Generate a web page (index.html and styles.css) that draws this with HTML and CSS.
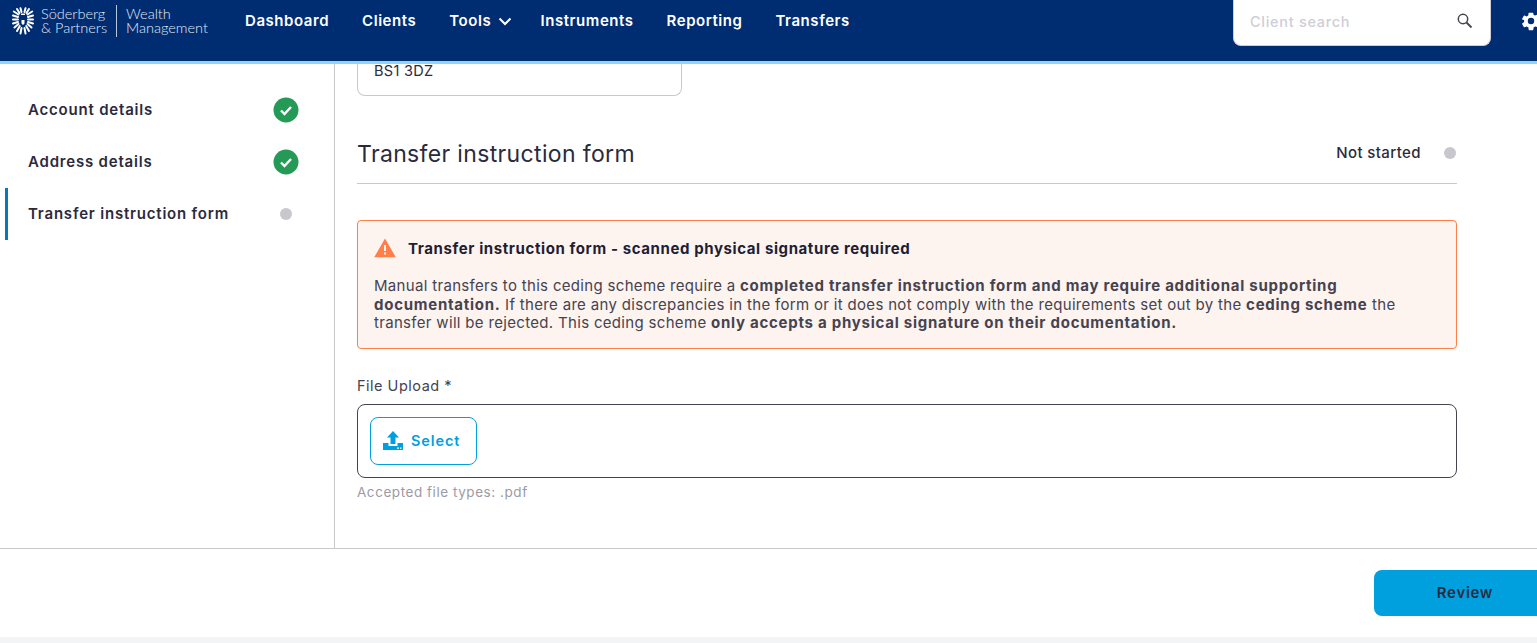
FILE: index.html
```html
<!DOCTYPE html>
<html lang="en">
<head>
<meta charset="utf-8">
<title>Transfer instruction form</title>
<link rel="stylesheet" href="styles.css">
</head>
<body>
<header class="topbar">
  <div class="brand">
    <svg class="brand-mark" width="22" height="28" viewBox="0 0 22 28">
      <g stroke="#fff" stroke-width="2" fill="none" stroke-linecap="round">
        <path d="M9.500 5 L8.500 1.200"/><path d="M12.500 5 L13.500 1.200"/>
        <path d="M7.500 6 L5 2"/><path d="M14.500 6 L17 2"/>
        <path d="M6.500 7.500 L1.800 4.500"/><path d="M15.500 7.500 L20.200 4.500"/>
        <path d="M6 10 L1 8.500"/><path d="M16 10 L21 8.500"/>
        <path d="M6 12.500 L1 12.500"/><path d="M16 12.500 L21 12.500"/>
        <path d="M6 15 L1 16.500"/><path d="M16 15 L21 16.500"/>
        <path d="M6.500 17 L2.500 20.500"/><path d="M15.500 17 L19.500 20.500"/>
        <path d="M7.800 19 L5 24"/><path d="M14.200 19 L17 24"/>
        <path d="M9.500 21 L8.500 26.500"/><path d="M12.500 21 L13.500 26.500"/>
      </g>
      <path fill="#fff" d="M9 6.500 H13 V8 H9 Z M9.500 13 H12.500 V16.500 L11 18 L9.500 16.500 Z"/>
    </svg>
    <div class="brand-name"><span>Söderberg</span><span>&amp; Partners</span></div>
    <div class="brand-sub"><span>Wealth</span><span>Management</span></div>
  </div>
  <nav class="nav">
    <a>Dashboard</a>
    <a>Clients</a>
    <a class="nav-tools">Tools
      <svg width="14" height="9" viewBox="0 0 14 9"><path d="M1.500 1.500 L7 7 L12.500 1.500" fill="none" stroke="#fff" stroke-width="2"/></svg>
    </a>
    <a>Instruments</a>
    <a>Reporting</a>
    <a>Transfers</a>
  </nav>
  <div class="search">
    <span class="search-ph">Client search</span>
    <svg width="18" height="18" viewBox="0 0 18 18"><circle cx="7" cy="7" r="4.700" fill="none" stroke="#45434f" stroke-width="1.500"/><path d="M10.500 10.500 L15.500 15.500" stroke="#45434f" stroke-width="1.800"/></svg>
  </div>
  <svg class="gear" width="22" height="22" viewBox="0 0 24 24"><path fill="#fff" fill-rule="evenodd" d="M19.400 13a7.500 7.500 0 0 0 0-2l2.100-1.600a.5.5 0 0 0 .1-.6l-2-3.500a.5.5 0 0 0-.6-.2l-2.500 1a7.300 7.300 0 0 0-1.700-1L14.400 3.400a.5.5 0 0 0-.5-.4h-4a.5.5 0 0 0-.5.400L9 6.100a7.300 7.300 0 0 0-1.700 1l-2.500-1a.5.5 0 0 0-.6.200l-2 3.500a.5.5 0 0 0 .1.600L4.500 11a7.500 7.500 0 0 0 0 2l-2.100 1.600a.5.5 0 0 0-.1.600l2 3.500a.5.5 0 0 0 .6.200l2.500-1a7.300 7.300 0 0 0 1.700 1l.4 2.700a.5.500 0 0 0 .5.400h4a.5.5 0 0 0 .5-.4l.4-2.700a7.300 7.300 0 0 0 1.700-1l2.500 1a.5.5 0 0 0 .6-.2l2-3.500a.5.5 0 0 0-.1-.6ZM12 15.500a3.500 3.500 0 1 1 0-7 3.500 3.500 0 0 1 0 7Z"/></svg>
</header>

<div class="workspace">
  <aside class="sidebar">
    <div class="step">
      <span class="step-label">Account details</span>
      <svg class="step-icon" width="26" height="26" viewBox="0 0 26 26"><circle cx="13" cy="13" r="12.500" fill="#259a57"/><path d="M8 13.500 L11.500 17 L18 10" fill="none" stroke="#fff" stroke-width="2.400"/></svg>
    </div>
    <div class="step">
      <span class="step-label">Address details</span>
      <svg class="step-icon" width="26" height="26" viewBox="0 0 26 26"><circle cx="13" cy="13" r="12.500" fill="#259a57"/><path d="M8 13.500 L11.500 17 L18 10" fill="none" stroke="#fff" stroke-width="2.400"/></svg>
    </div>
    <div class="step step-active">
      <span class="step-label">Transfer instruction form</span>
      <span class="step-dot-wrap"><span class="dot"></span></span>
    </div>
  </aside>

  <main class="content">
    <div class="cut-field">BS1 3DZ</div>

    <div class="section-head">
      <h2>Transfer instruction form</h2>
      <div class="status">Not started <span class="dot"></span></div>
    </div>

    <section class="alert">
      <div class="alert-title">
        <svg width="22" height="20" viewBox="0 0 22 20"><path fill="#ff7f4a" fill-rule="evenodd" d="M11 0.500 L21.800 19.300 H0.200 Z M10 7 V13 H12 V7 Z M10 14.500 V16.500 H12 V14.500 Z"/></svg>
        <span>Transfer instruction form - scanned physical signature required</span>
      </div>
      <p>Manual transfers to this ceding scheme require a <b>completed transfer instruction form and may require additional supporting documentation.</b> If there are any discrepancies in the form or it does not comply with the requirements set out by the <b>ceding scheme</b> the transfer will be rejected. This ceding scheme <b>only accepts a physical signature on their documentation.</b></p>
    </section>

    <div class="upload-label">File Upload *</div>
    <div class="upload-box">
      <button class="select-btn">
        <svg width="22" height="22" viewBox="0 0 22 22"><path fill="#00a0df" d="M11 1 L17 7.500 H13.500 V14 H8.500 V7.500 H5 Z M1 13 H6.500 V16 H15.500 V13 H21 V20 H1 Z"/><path fill="#fff" d="M15 17.500 H17 V18.800 H15 Z M18 17.500 H19.500 V18.800 H18 Z"/></svg>
        <span class="btn-text">Select</span>
      </button>
    </div>
    <div class="upload-hint">Accepted file types: .pdf</div>
  </main>
</div>

<footer class="footer">
  <button class="review"><span class="btn-text">Review</span></button>
</footer>
<div class="page-end"></div>
</body>
</html>
```
FILE: styles.css
```css
* { box-sizing: border-box; }
html, body { margin: 0; height: 643px; overflow: hidden; }
body {
  width: 1537px;
  background: #fff;
  font-family: "Inter", "Liberation Sans", sans-serif;
  color: #2b2a3d;
  display: flex;
  flex-direction: column;
}

/* top bar */
.topbar {
  height: 64px;
  flex: none;
  background: #002d72;
  border-bottom: 3px solid #8fd6f4;
  display: flex;
  align-items: flex-start;
  color: #fff;
  overflow: hidden;
}
.brand { display: flex; align-items: center; width: 245px; padding: 5px 0 0 12px; flex: none; }
.brand-mark { flex: none; margin-right: 7px; }
.brand-name, .brand-sub {
  display: flex;
  flex-direction: column;
  font-family: "Lato", "Liberation Sans", sans-serif;
  font-size: 14.500px;
  line-height: 14px;
  font-weight: 300;
  color: #e3e9f2;
  white-space: nowrap;
}
.brand-name { padding-right: 9px; }
.brand-sub { border-left: 1px solid #b8c6dc; padding-left: 9px; height: 32px; justify-content: center; }
.nav { display: flex; gap: 33px; padding-top: 11px; width: 988px; flex: none; }
.nav a {
  font-size: 15px;
  line-height: 20px;
  font-weight: 600;
  letter-spacing: 0.550px;
  color: #fff;
  white-space: nowrap;
}
.nav-tools svg { margin: 0 -4px 0 2px; }
.search {
  width: 258px;
  height: 46px;
  flex: none;
  background: #fff;
  border: 1px solid #cfcdd6;
  border-top: none;
  border-radius: 0 0 8px 8px;
  display: flex;
  align-items: center;
  justify-content: space-between;
  padding: 0 16px;
}
.search-ph { font-size: 14.500px; font-weight: 500; color: #cfcdd6; letter-spacing: 0.700px; padding-bottom: 3px; }
.search svg { margin-bottom: 4px; }
.gear { flex: none; margin: 10px 0 0 29px; }

/* body */
.workspace { display: flex; height: 484px; flex: none; }
.sidebar {
  width: 335px;
  flex: none;
  border-right: 1px solid #c9c9c9;
  padding-top: 20px;
}
.step {
  height: 52px;
  margin-left: 5px;
  padding: 0 35px 0 20px;
  border-left: 3px solid transparent;
  display: flex;
  align-items: center;
  justify-content: space-between;
  font-size: 15px;
  font-weight: 600;
  letter-spacing: 0.800px;
}
.step-label { padding-bottom: 2px; }
.step-active { border-left-color: #0a78b4; }
.step-dot-wrap { width: 26px; display: flex; justify-content: center; }
.dot { display: inline-block; width: 12px; height: 12px; border-radius: 50%; background: #c8c7ce; }

.content { width: 1100px; margin-left: 22px; flex: none; }
.cut-field {
  width: 325px;
  height: 32px;
  border: 1px solid #c9c9c9;
  border-top: none;
  border-radius: 0 0 8px 8px;
  padding: 0 16px;
  font-size: 14.500px;
  line-height: 14px;
  letter-spacing: 0.300px;
}
.section-head {
  height: 88px;
  border-bottom: 1px solid #c9c9c9;
  display: flex;
  justify-content: space-between;
  align-items: center;
  padding: 30px 1px 2px 0;
}
.section-head h2 { margin: 0; font-size: 23px; font-weight: 400; letter-spacing: 0.350px; }
.status { display: flex; align-items: center; gap: 23px; font-size: 15px; font-weight: 500; letter-spacing: 0.400px; padding-bottom: 2px; }
.alert {
  margin-top: 36px;
  height: 129px;
  background: #fdf3ef;
  border: 1px solid #ff7f4a;
  border-radius: 4px;
  padding: 17px 16px 0;
}
.alert-title { display: flex; align-items: center; gap: 12px; font-size: 15px; font-weight: 700; letter-spacing: 0.600px; color: #1f1e33; }
.alert p { margin: 19px 0 0; font-size: 15px; line-height: 18.500px; letter-spacing: 0.320px; color: #45434f; }
.alert b { font-weight: 700; letter-spacing: 0.740px; }
.upload-label { margin-top: 28px; font-size: 14.500px; line-height: 18px; color: #45434f; letter-spacing: 0.500px; }
.upload-box {
  margin-top: 9px;
  height: 74px;
  border: 1px solid #45434f;
  border-radius: 8px;
  padding: 12px;
}
.select-btn {
  width: 107px;
  height: 48px;
  background: #fff;
  border: 1px solid #00a0df;
  border-radius: 8px;
  display: flex;
  align-items: center;
  gap: 7px;
  padding: 0 11px;
  color: #00a0df;
  font: 600 14.500px "Inter", "Liberation Sans", sans-serif;
  letter-spacing: 0.900px;
}
.btn-text { display: block; padding-bottom: 2px; }
.upload-hint { margin-top: 5px; font-size: 13.500px; line-height: 18px; color: #9c9aa5; letter-spacing: 0.550px; }

/* footer */
.footer {
  height: 89px;
  flex: none;
  border-top: 1px solid #c9c9c9;
  display: flex;
  justify-content: flex-end;
  padding-top: 21px;
  overflow: hidden;
}
.review {
  width: 182px;
  height: 46px;
  margin-right: -19px;
  flex: none;
  background: #00a0df;
  border: none;
  border-radius: 8px;
  color: #2b2a3d;
  font: 600 15px "Inter", "Liberation Sans", sans-serif;
  letter-spacing: 0.700px;
}
.page-end { height: 6px; flex: none; background: #f3f4f6; }
```
